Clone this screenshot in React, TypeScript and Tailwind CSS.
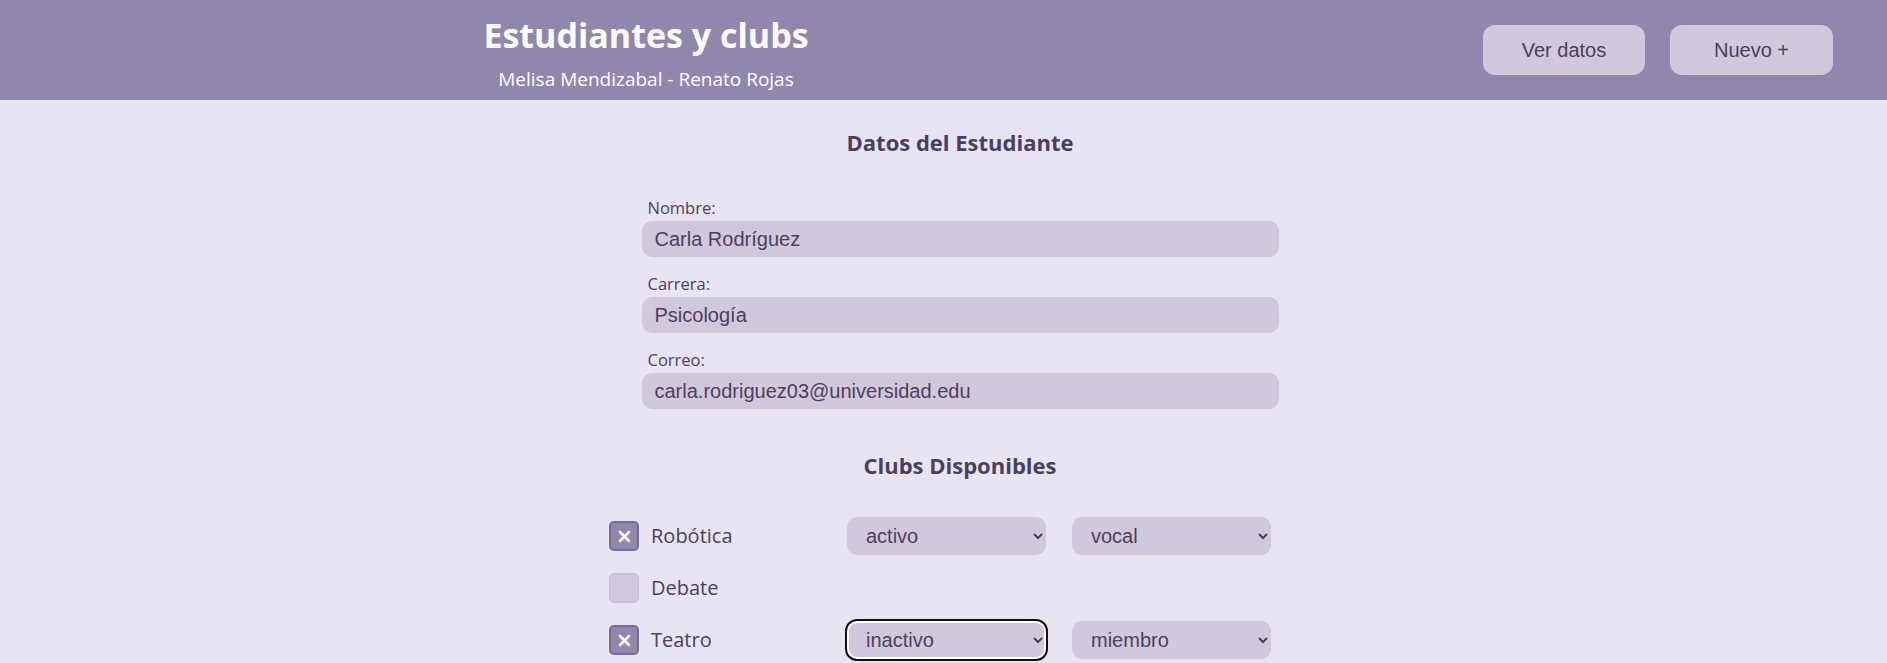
import React from 'react';

const clubs = [
  { nombre: 'Robótica', marcado: true, estado: 'activo', rol: 'vocal', foco: false },
  { nombre: 'Debate', marcado: false, estado: '', rol: '', foco: false },
  { nombre: 'Teatro', marcado: true, estado: 'inactivo', rol: 'miembro', foco: true },
];

function Campo({ label, value }: { label: string; value: string }) {
  return (
    <div className="flex flex-col w-[637px]">
      <label className="text-[16.5px] leading-[20px] text-[#4b3f5e] pl-[6px] mb-[3px] font-['Open_Sans',sans-serif]">
        {label}
      </label>
      <input
        type="text"
        defaultValue={value}
        className="h-[36px] w-full rounded-[10px] bg-[#d2c8dc] px-[13px] text-[20px] text-[#4b3f5e] font-['Liberation_Sans',Arial,sans-serif] outline-none border-none"
      />
    </div>
  );
}

function Check({ marcado }: { marcado: boolean }) {
  if (marcado) {
    return (
      <div className="w-[30px] h-[30px] rounded-[5px] bg-[#9187ad] border-2 border-[#776c96] flex items-center justify-center">
        <svg width="13" height="13" viewBox="0 0 13 13">
          <path d="M2 2 L11 11 M11 2 L2 11" stroke="white" strokeWidth="2.6" strokeLinecap="round" />
        </svg>
      </div>
    );
  }
  return <div className="w-[30px] h-[30px] rounded-[5px] bg-[#d3c9de] border-2 border-[#cdbfdf]" />;
}

export default function App() {
  return (
    <div className="min-h-screen bg-[#e8e4f2]">
      <header className="h-[100px] bg-[#9187ad] flex items-center justify-between pl-[480px] pr-[54px]">
        <div className="flex flex-col items-center w-[332px] pt-[2px]">
          <h1 className="text-[34px] leading-[44px] font-bold text-white font-['Open_Sans',sans-serif]">
            Estudiantes y clubs
          </h1>
          <p className="text-[19px] leading-[22px] mt-[11px] text-white font-['Open_Sans',sans-serif]">
            Melisa Mendizabal - Renato Rojas
          </p>
        </div>
        <div className="flex gap-[25px]">
          <button className="w-[162px] h-[50px] rounded-[12px] bg-[#d2c8dc] text-[20px] text-[#4b3f5e] font-['Liberation_Sans',Arial,sans-serif]">
            Ver datos
          </button>
          <button className="w-[163px] h-[50px] rounded-[12px] bg-[#d2c8dc] text-[20px] text-[#4b3f5e] font-['Liberation_Sans',Arial,sans-serif]">
            Nuevo +
          </button>
        </div>
      </header>

      <main className="flex justify-center pl-[33px] pt-[27px]">
        <div className="w-[702px] flex flex-col items-center">
          <h3 className="text-[22px] leading-[30px] font-bold text-[#4b3f5e] font-['Open_Sans',sans-serif]">
            Datos del Estudiante
          </h3>
          <div className="flex flex-col gap-[17px] mt-[41px]">
            <Campo label="Nombre:" value="Carla Rodríguez" />
            <Campo label="Carrera:" value="Psicología" />
            <Campo label="Correo:" value="carla.rodriguez03@universidad.edu" />
          </div>

          <h3 className="mt-[41px] text-[22px] leading-[30px] font-bold text-[#4b3f5e] font-['Open_Sans',sans-serif]">
            Clubs Disponibles
          </h3>

          <div className="self-stretch flex flex-col gap-[14px] mt-[37px]">
            {clubs.map((c) => (
              <div key={c.nombre} className="flex items-center h-[38px]">
                <div className="w-[238px] flex items-center gap-[12px]">
                  <Check marcado={c.marcado} />
                  <span className="text-[20px] text-[#4b3f5e] font-['Open_Sans',sans-serif]">{c.nombre}</span>
                </div>
                {c.marcado && (
                  <div className="flex gap-[26px]">
                    <select
                      defaultValue={c.estado}
                      className={
                        c.foco
                          ? 'w-[199px] h-[38px] rounded-[10px] bg-[#d2c8dc] pl-[15px] pr-[6px] text-[20px] text-[#4b3f5e] font-[\'Liberation_Sans\',Arial,sans-serif] border-none outline-2 outline-[#111] shadow-[inset_0_0_0_2px_#ffffff]'
                          : 'w-[199px] h-[38px] rounded-[10px] bg-[#d2c8dc] pl-[15px] pr-[6px] text-[20px] text-[#4b3f5e] font-[\'Liberation_Sans\',Arial,sans-serif] border-none outline-none'
                      }
                    >
                      <option value="activo">activo</option>
                      <option value="inactivo">inactivo</option>
                    </select>
                    <select
                      defaultValue={c.rol}
                      className="w-[199px] h-[38px] rounded-[10px] bg-[#d2c8dc] pl-[15px] pr-[6px] text-[20px] text-[#4b3f5e] font-['Liberation_Sans',Arial,sans-serif] border-none outline-none"
                    >
                      <option value="miembro">miembro</option>
                      <option value="vocal">vocal</option>
                      <option value="presidente">presidente</option>
                    </select>
                  </div>
                )}
              </div>
            ))}
          </div>
        </div>
      </main>
    </div>
  );
}
